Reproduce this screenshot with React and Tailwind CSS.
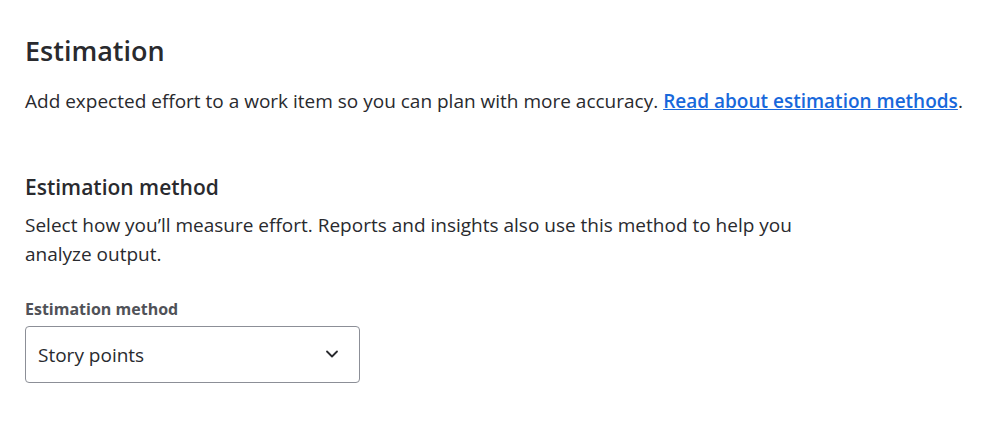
import { FiChevronDown } from "react-icons/fi";

const EstimationSettings = () => {
  return (
    <div className="min-h-screen bg-white px-[25px] pt-[33px] font-['Open_Sans',sans-serif] text-[#292a2e]">
      <h1 className="text-[27px] font-semibold leading-[36px]">Estimation</h1>
      <p className="mt-[18px] text-[19px] leading-[28px]">
        Add expected effort to a work item so you can plan with more accuracy.{" "}
        <a href="#" className="font-semibold text-[#1868db] underline">
          Read about estimation methods
        </a>
        .
      </p>

      <h2 className="mt-[58px] text-[21px] font-semibold leading-[28px]">Estimation method</h2>
      <p className="mt-[10px] max-w-[800px] text-[19px] leading-[29px]">
        Select how you’ll measure effort. Reports and insights also use this method to help you
        analyze output.
      </p>

      <label className="mt-[30px] block text-[16px] font-bold leading-[20px] text-[#505258]">
        Estimation method
      </label>
      <button
        type="button"
        className="mt-[7px] flex h-[57px] w-[335px] items-center justify-between rounded-[4px] border border-[#8c8f97] bg-white pb-[2px] pl-[12px] pr-[17px] text-left text-[19px] text-[#292a2e]"
      >
        <span className="translate-y-[2px]">Story points</span>
        <FiChevronDown size={20} strokeWidth={2.2} className="text-[#292a2e]" />
      </button>
    </div>
  );
};

export default EstimationSettings;
